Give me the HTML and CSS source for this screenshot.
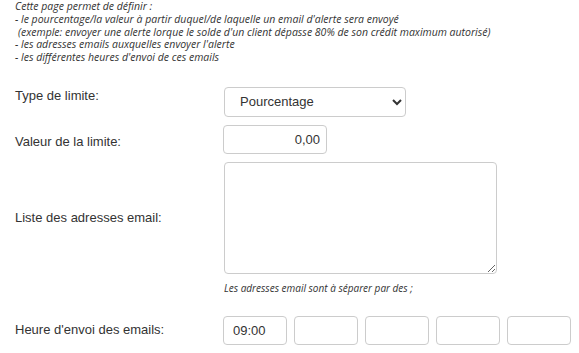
FILE: index.html
```html
<!DOCTYPE html>
<html lang="fr">
<head>
    <meta charset="UTF-8">
    <meta name="viewport" content="width=device-width, initial-scale=1.0">
    <title>Alertes crédit client</title>
    <link rel="stylesheet" href="styles.css">
</head>
<body>
    <div class="page">
        <div class="intro">
            Cette page permet de définir :<br>
            - le pourcentage/la valeur à partir duquel/de laquelle un email d'alerte sera envoyé<br>
            <span class="indent">(exemple: envoyer une alerte lorque le solde d'un client dépasse 80% de son crédit maximum autorisé)</span><br>
            - les adresses emails auxquelles envoyer l'alerte<br>
            - les différentes heures d'envoi de ces emails
        </div>

        <form class="settings">
            <div class="row row-type">
                <label class="row-label">Type de limite:</label>
                <select class="input select-type">
                    <option>Pourcentage</option>
                    <option>Valeur</option>
                </select>
            </div>
            <div class="row row-value">
                <label class="row-label">Valeur de la limite:</label>
                <input class="input input-value" type="text" value="0,00">
            </div>
            <div class="row">
                <label class="row-label">Liste des adresses email:</label>
                <textarea class="input input-emails"></textarea>
            </div>
            <div class="row hint-row">
                <div class="row-label"></div>
                <div class="hint">Les adresses email sont à séparer par des ;</div>
            </div>
            <div class="row row-hours">
                <label class="row-label">Heure d'envoi des emails:</label>
                <div class="hours">
                    <input class="input input-hour" type="text" value="09:00">
                    <input class="input input-hour" type="text" value="">
                    <input class="input input-hour" type="text" value="">
                    <input class="input input-hour" type="text" value="">
                    <input class="input input-hour" type="text" value="">
                </div>
            </div>
        </form>
    </div>
</body>
</html>
```

FILE: styles.css
```css
* {
    margin: 0;
    padding: 0;
    box-sizing: border-box;
}
body {
    background-color: #fff;
    color: #333;
    font-family: "Liberation Sans", Arial, sans-serif;
    font-size: 13px;
}
.page {
    padding: 0 15px;
}
.intro {
    font-family: "Open Sans", sans-serif;
    font-style: italic;
    font-size: 10.5px;
    line-height: 12.75px;
    color: #333;
}
.indent {
    padding-left: 3px;
}
.settings {
    margin-top: 23px;
}
.row {
    display: flex;
    align-items: center;
    margin-bottom: 8px;
}
.row-label {
    width: 208px;
    flex-shrink: 0;
    line-height: 16px;
}
.row-type {
    align-items: flex-start;
}
.row-type .row-label {
    padding-top: 1px;
}
.row-value .row-label {
    padding-top: 6px;
}
.input {
    border: 1px solid #ccc;
    border-radius: 4px;
    background-color: #fff;
    color: #333;
    font-family: "Liberation Sans", Arial, sans-serif;
    font-size: 13px;
    outline: none;
}
.select-type {
    width: 182px;
    height: 30px;
    margin-left: 1px;
    padding-left: 11px;
}
.input-value {
    width: 104px;
    height: 29px;
    text-align: right;
    padding-right: 6px;
}
.input-emails {
    width: 273px;
    height: 112px;
    margin-left: 1px;
    resize: both;
}
.hint-row {
    margin-bottom: 0;
}
.hint {
    padding-left: 1px;
    font-family: "Open Sans", sans-serif;
    font-style: italic;
    font-size: 10px;
    line-height: 13px;
}
.row-hours {
    margin-top: 21px;
}
.hours {
    display: flex;
    gap: 7px;
}
.input-hour {
    width: 64px;
    height: 29px;
    padding-left: 9px;
}
```
